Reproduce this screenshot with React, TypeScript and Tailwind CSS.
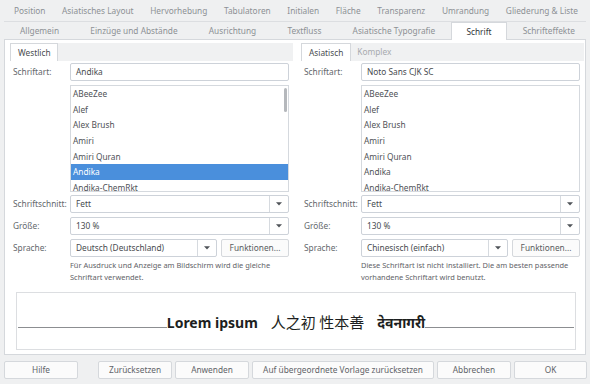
import React from 'react';

const rowOne = [
  "Position",
  "Asiatisches Layout",
  "Hervorhebung",
  "Tabulatoren",
  "Initialen",
  "Fläche",
  "Transparenz",
  "Umrandung",
  "Gliederung & Liste",
];

const rowTwo = [
  "Allgemein",
  "Einzüge und Abstände",
  "Ausrichtung",
  "Textfluss",
  "Asiatische Typografie",
  "Schrift",
  "Schrifteffekte",
];

const fonts = [
  "ABeeZee",
  "Alef",
  "Alex Brush",
  "Amiri",
  "Amiri Quran",
  "Andika",
  "Andika-ChemRkt",
];

function Arrow() {
  return (
    <svg width="6" height="4" viewBox="0 0 6 4">
      <path d="M0 0.3h6L3 3.6z" fill="#4f5358" />
    </svg>
  );
}

function Select({ value, className = "" }: { value: string; className?: string }) {
  return (
    <div
      className={`flex h-[18px] items-stretch rounded-[2px] border border-[#cdd2d9] bg-white ${className}`}
    >
      <div className="flex flex-1 items-center pl-[5px] text-[#484b4f]">{value}</div>
      <div className="flex w-[19px] items-center justify-center border-l border-[#d6dadf]">
        <Arrow />
      </div>
    </div>
  );
}

function Row({ label, children }: { label: string; children: React.ReactNode }) {
  return (
    <div className="flex items-center">
      <div className="w-[57px] shrink-0 text-[#63676c]">{label}</div>
      {children}
    </div>
  );
}

function FontColumn({
  tabs,
  font,
  selected,
  language,
  note,
  scroll,
  tabPad,
}: {
  tabs: string[];
  font: string;
  selected: number;
  language: string;
  note: string[];
  scroll: boolean;
  tabPad: string;
}) {
  return (
    <div className="flex flex-col">
      <div className="mt-[3px] flex h-[18px] items-end bg-[#f0f1f2]">
        <div
          className={`flex h-[18px] items-center border-x border-t border-[#d5d8dc] bg-white text-[#4a4d51] ${tabPad}`}
        >
          {tabs[0]}
        </div>
        {tabs[1] && (
          <div className="flex h-[18px] items-center pl-[6px] text-[#a7aaae]">{tabs[1]}</div>
        )}
      </div>

      <div className="flex flex-col pl-[3px] pr-[4px]">
        <div className="mt-[2px]">
          <Row label="Schriftart:">
            <div className="flex h-[18px] flex-1 items-center rounded-[2px] border border-[#cdd2d9] bg-white pl-[5px] text-[#484b4f]">
              {font}
            </div>
          </Row>
        </div>

        <div className="mt-[4px] flex">
          <div className="w-[57px] shrink-0" />
          <div className="relative h-[107px] flex-1 overflow-hidden border border-[#d5d9de] bg-white">
            {fonts.map((f, i) => (
              <div
                key={f}
                className={`flex h-[15.7px] items-center pl-[2px] ${
                  i === selected ? "bg-[#4a8fdc] text-white" : "text-[#4f5257]"
                }`}
              >
                {f}
              </div>
            ))}
            {scroll && (
              <div className="absolute right-[1px] top-[2px] h-[24px] w-[3px] rounded-full bg-[#b5b8bc]" />
            )}
          </div>
        </div>

        <div className="mt-[3px]">
          <Row label="Schriftschnitt:">
            <Select value="Fett" className="flex-1" />
          </Row>
        </div>
        <div className="mt-[4px]">
          <Row label="Größe:">
            <Select value="130 %" className="flex-1" />
          </Row>
        </div>
        <div className="mt-[4px]">
          <Row label="Sprache:">
            <div className="flex flex-1 gap-[4px]">
              <Select value={language} className="w-[147px]" />
              <div className="flex h-[18px] flex-1 items-center justify-center rounded-[2px] border border-[#d5d8dc] bg-[#fbfbfb] text-[#5a5d61]">
                Funktionen...
              </div>
            </div>
          </Row>
        </div>
        <div className="mt-[2px] flex">
          <div className="w-[57px] shrink-0" />
          <div className="whitespace-nowrap text-[7.45px] leading-[12px] text-[#5f6368]">
            {note.map((n) => (
              <div key={n}>{n}</div>
            ))}
          </div>
        </div>
      </div>
    </div>
  );
}

export default function App() {
  return (
    <div className="h-[384px] w-[590px] overflow-hidden bg-[#eff0f1] font-['Noto_Sans','Open_Sans',sans-serif] text-[8.3px] leading-[12px]">
      <div className="mx-[4px] flex h-[22px] items-center justify-between border-b border-[#dcdee1] pl-[10px] pr-[8px] pt-[1px] text-[#8d9095]">
        {rowOne.map((t) => (
          <span key={t}>{t}</span>
        ))}
      </div>

      <div className="ml-[5px] flex h-[17px] items-end justify-between">
        {rowTwo.map((t) =>
          t === "Schrift" ? (
            <div
              key={t}
              className="relative z-10 mb-[-1px] flex h-[18px] items-center border-x border-t border-[#d5d8dc] bg-white px-[14px] text-[#33373b]"
            >
              {t}
            </div>
          ) : (
            <div key={t} className="flex h-[17px] items-center px-[15px] text-[#8d9095]">
              {t}
            </div>
          )
        )}
      </div>

      <div className="mx-[4px] h-[316px] border border-[#d5d8dc] bg-white pl-[5px] pr-[1px]">
        <div className="grid grid-cols-2 gap-[8px]">
          <FontColumn
            tabs={["Westlich"]}
            font="Andika"
            selected={5}
            language="Deutsch (Deutschland)"
            note={[
              "Für Ausdruck und Anzeige am Bildschirm wird die gleiche",
              "Schriftart verwendet.",
            ]}
            scroll
            tabPad="pl-[7px] pr-[6px]"
          />
          <FontColumn
            tabs={["Asiatisch", "Komplex"]}
            font="Noto Sans CJK SC"
            selected={-1}
            language="Chinesisch (einfach)"
            note={[
              "Diese Schriftart ist nicht installiert. Die am besten passende",
              "vorhandene Schriftart wird benutzt.",
            ]}
            scroll={false}
            tabPad="px-[7px]"
          />
        </div>

        <div className="ml-[6px] mt-[9px] h-[58px] w-[560px] border border-[#dcdee1] bg-white px-[1px] pt-[20px]">
          <div className="flex items-baseline text-[#1d1f21]">
            <div className="h-px flex-1 bg-[#8c8e91]" />
            <span className="text-[14px] font-bold leading-[18px]">Lorem ipsum</span>
            <span className="mx-[13px] font-['Noto_Sans_CJK_SC',sans-serif] text-[15px] leading-[18px]">
              人之初 性本善
            </span>
            <span className="text-[14px] font-bold leading-[18px]">देवनागरी</span>
            <div className="h-px flex-1 bg-[#8c8e91]" />
          </div>
        </div>
      </div>

      <div className="mt-[6px] flex h-[18px] pl-[4px] text-[#5f6368]">
        <Button w="w-[74px]">Hilfe</Button>
        <div className="w-[20px]" />
        <div className="flex gap-[3px]">
          <Button w="w-[74px]">Zurücksetzen</Button>
          <Button w="w-[74px]">Anwenden</Button>
          <Button w="w-[182px]">Auf übergeordnete Vorlage zurücksetzen</Button>
          <Button w="w-[74px]">Abbrechen</Button>
          <Button w="w-[73px]">OK</Button>
        </div>
      </div>
    </div>
  );
}

function Button({ w, children }: { w: string; children: React.ReactNode }) {
  return (
    <div
      className={`flex h-[18px] items-center justify-center rounded-[2px] border border-[#d5d8dc] bg-[#fbfbfb] ${w}`}
    >
      {children}
    </div>
  );
}
